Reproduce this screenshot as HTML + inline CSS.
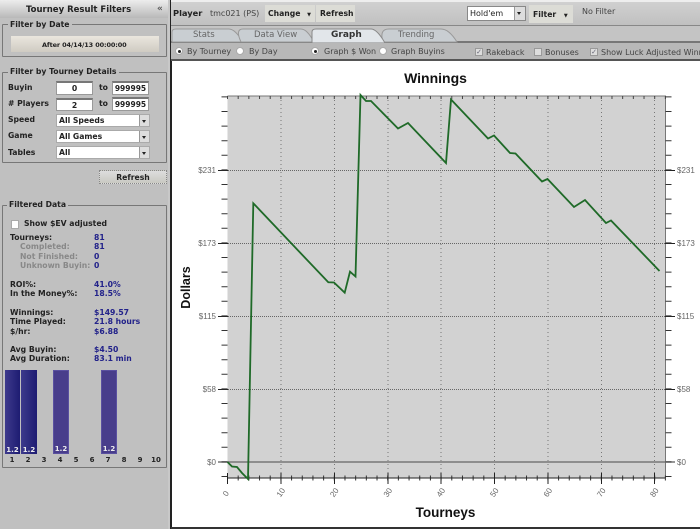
<!DOCTYPE html>
<html><head><meta charset="utf-8"><style>
html,body{margin:0;padding:0}
body{width:700px;height:529px;overflow:hidden;position:relative;background:#c0c0c0;font-family:"DejaVu Sans","Liberation Sans",sans-serif;color:#111;filter:blur(.3px)}
div,span.a{position:absolute;box-sizing:border-box}
.t{position:absolute;white-space:nowrap;font-size:7.7px;line-height:10px;font-weight:bold;color:#222}
.g{color:#888}.b{color:#22228a}
.box{border:1px solid #777;border-radius:1px}
.lg{position:absolute;background:#c0c0c0;white-space:nowrap;font-size:7.7px;line-height:10px;font-weight:bold;color:#222;padding:0 2px}
.in{background:#fff;border:1px solid #999;border-top:2px solid #777;text-align:center;font-size:7.7px;line-height:11px;font-weight:bold;color:#222}
.sel{background:#fff;border:1px solid #aaa;font-size:7.7px;line-height:12px;font-weight:bold;color:#222;padding-left:2px}
.sel i{position:absolute;right:0;top:0;width:9px;height:100%;background:#ddd;border-left:1px solid #999}
.sel i:after{content:"";position:absolute;left:2px;top:5px;border:2px solid transparent;border-top:3px solid #222}
.bar{background:linear-gradient(90deg,#3d3a8c,#1e1c72);height:84px;top:370px;width:16px}
.bar2{background:#483d8b;border:1px solid #5a50a0}
.bar span{position:absolute;bottom:-1px;left:0;right:0;text-align:center;font-size:7px;line-height:9px;color:#eee;font-weight:bold}
.n{position:absolute;top:456px;width:16px;text-align:center;font-size:7px;line-height:9px;font-weight:bold;color:#222;white-space:nowrap}
.tb{font-family:"DejaVu Sans",sans-serif;font-size:8px;line-height:10px;color:#444;position:absolute;white-space:nowrap}
.rad{position:absolute;width:8px;height:8px;border-radius:50%;background:#fff;border:1px solid #aaa}
.rad.on:after{content:"";position:absolute;left:1.500px;top:1.500px;width:3px;height:3px;border-radius:50%;background:#222}
.chk{position:absolute;width:8px;height:8px;background:#ddd;border:1px solid #999;font-size:7px;line-height:7px;color:#667;text-align:center}
.btn{background:linear-gradient(#ddd,#c9c9c2);font-weight:bold;font-size:7.7px;line-height:10px;color:#222;white-space:nowrap}
</style></head><body>
<!-- sidebar -->
<div style="left:0;top:0;width:169px;height:18px;background:linear-gradient(#ededed,#b9b9b9)"></div>
<div class="t" style="left:26px;top:5px;font-size:8.500px;color:#222">Tourney Result Filters</div>
<div class="t" style="left:157px;top:4px;font-size:9px;color:#555">«</div>

<div class="box" style="left:2px;top:24px;width:165px;height:33px"></div>
<div class="lg" style="left:8px;top:20px">Filter by Date</div>
<div style="left:11px;top:36px;width:148px;height:16px;background:linear-gradient(#eae6de,#cfcbc2)"></div>
<div class="t" style="left:42px;top:40px;font-size:6.500px;letter-spacing:-.12px">After 04/14/13 00:00:00</div>

<div class="box" style="left:2px;top:72px;width:165px;height:91px"></div>
<div class="lg" style="left:8px;top:67px">Filter by Tourney Details</div>
<div class="t" style="left:8px;top:83px">Buyin</div>
<div class="in" style="left:56px;top:81px;width:37px;height:14px">0</div>
<div class="t" style="left:99px;top:83px">to</div>
<div class="in" style="left:112px;top:81px;width:37px;height:14px;font-size:7.500px">999995</div>
<div class="t" style="left:8px;top:99px"># Players</div>
<div class="in" style="left:56px;top:98px;width:37px;height:13px">2</div>
<div class="t" style="left:99px;top:99px">to</div>
<div class="in" style="left:112px;top:97px;width:37px;height:14px;font-size:7.500px">999995</div>
<div class="t" style="left:8px;top:115px">Speed</div>
<div class="sel" style="left:56px;top:114px;width:94px;height:13px">All Speeds<i></i></div>
<div class="t" style="left:8px;top:131px">Game</div>
<div class="sel" style="left:56px;top:130px;width:94px;height:13px">All Games<i></i></div>
<div class="t" style="left:8px;top:148px">Tables</div>
<div class="sel" style="left:56px;top:146px;width:94px;height:13px">All<i></i></div>
<div class="btn" style="left:99px;top:170px;width:68px;height:14px;border:1px dotted #888;text-align:center;padding-top:2px">Refresh</div>

<div class="box" style="left:2px;top:205px;width:165px;height:263px"></div>
<div class="lg" style="left:7px;top:200px">Filtered Data</div>
<div style="left:11px;top:220px;width:8px;height:9px;background:#fff;border:1px solid #aaa"></div>
<div class="t" style="left:24px;top:219px">Show $EV adjusted</div>
<div class="t" style="left:10px;top:233px">Tourneys:</div><div class="t b" style="left:94px;top:233px">81</div>
<div class="t g" style="left:20px;top:242px">Completed:</div><div class="t b" style="left:94px;top:242px">81</div>
<div class="t g" style="left:20px;top:252px">Not Finished:</div><div class="t b" style="left:94px;top:252px">0</div>
<div class="t g" style="left:20px;top:261px">Unknown Buyin:</div><div class="t b" style="left:94px;top:261px">0</div>
<div class="t" style="left:10px;top:280px">ROI%:</div><div class="t b" style="left:94px;top:280px">41.0%</div>
<div class="t" style="left:10px;top:289px">In the Money%:</div><div class="t b" style="left:94px;top:289px">18.5%</div>
<div class="t" style="left:10px;top:308px">Winnings:</div><div class="t b" style="left:94px;top:308px">$149.57</div>
<div class="t" style="left:10px;top:317px">Time Played:</div><div class="t b" style="left:94px;top:317px">21.8 hours</div>
<div class="t" style="left:10px;top:327px">$/hr:</div><div class="t b" style="left:94px;top:327px">$6.88</div>
<div class="t" style="left:10px;top:345px">Avg Buyin:</div><div class="t b" style="left:94px;top:345px">$4.50</div>
<div class="t" style="left:10px;top:354px">Avg Duration:</div><div class="t b" style="left:94px;top:354px">83.1 min</div>

<div class="bar" style="left:5px;width:15px"><span>1.2</span></div>
<div class="bar" style="left:21px"><span>1.2</span></div>
<div class="bar bar2" style="left:53px"><span>1.2</span></div>
<div class="bar bar2" style="left:101px"><span>1.2</span></div>
<div class="n" style="left:4px">1</div><div class="n" style="left:20px">2</div><div class="n" style="left:36px">3</div><div class="n" style="left:52px">4</div><div class="n" style="left:68px">5</div><div class="n" style="left:84px">6</div><div class="n" style="left:100px">7</div><div class="n" style="left:116px">8</div><div class="n" style="left:132px">9</div><div class="n" style="left:148px">10</div>

<!-- right panel -->
<div style="left:168px;top:0;width:532px;height:529px;background:#fff"></div>
<div style="left:168px;top:0;width:2px;height:529px;background:#c8c8c8"></div>
<div style="left:170px;top:0;width:1.500px;height:529px;background:#222"></div>
<div style="left:171px;top:527px;width:529px;height:2px;background:#333"></div>
<div style="left:171px;top:0;width:529px;height:26px;background:linear-gradient(#d0d0d0,#c0c0c0);border-top:2px solid #eee;border-bottom:1px solid #888"></div>
<div class="t" style="left:173px;top:8px;font-size:8.300px">Player</div>
<div class="tb" style="left:210px;top:9px">tmc021 (PS)</div>
<div class="btn" style="left:265px;top:5px;width:50px;height:17px;padding:4px 0 0 3px;background:#dcdcd6">Change <span style="font-size:5px;margin-left:4px">▼</span></div>
<div class="btn" style="left:316px;top:5px;width:39px;height:17px;padding:4px 0 0 4px;background:#dcdcd6">Refresh</div>
<div class="sel" style="left:467px;top:6px;width:59px;height:15px;font-weight:normal;line-height:13px;font-size:8px;border-color:#888">Hold'em<i style="width:10px"></i></div>
<div class="btn" style="left:529px;top:5px;width:44px;height:18px;padding:5px 0 0 4px;background:#dcdcd6">Filter <span style="font-size:5px;margin-left:5px">▼</span></div>
<div class="tb" style="left:582px;top:7px">No Filter</div>

<!-- tabs -->
<div style="left:171px;top:26px;width:529px;height:17px;background:#c4c4c4;border-bottom:2px solid #777"></div>
<svg style="position:absolute;left:171px;top:26px" width="300" height="18">
<path d="M1 16V6Q1 3 5 3H58Q64 3 72 16Z" fill="#c9ced2" stroke="#999"/>
<path d="M70 16Q64 3 72 3H130Q136 3 143 16Z" fill="#c9ced2" stroke="#999"/>
<path d="M212 16Q208 3 218 3H270Q278 3 286 16Z" fill="#c9ced2" stroke="#999"/>
<path d="M141 17V6Q141 3 145 3H200Q206 3 214 17Z" fill="#e2e6ea" stroke="#888"/>
</svg>
<div class="tb" style="left:193px;top:30px;font-size:8.500px;color:#666">Stats</div>
<div class="tb" style="left:254px;top:30px;font-size:8.500px;color:#666">Data View</div>
<div class="tb" style="left:331px;top:30px;font-size:9px;font-weight:bold;color:#333">Graph</div>
<div class="tb" style="left:398px;top:30px;font-size:8.500px;color:#666">Trending</div>

<!-- options -->
<div style="left:171px;top:43px;width:529px;height:18px;background:#b8b8b8;border-bottom:2px solid #555"></div>
<span class="rad on a" style="left:175px;top:47px"></span><div class="tb" style="left:187px;top:47px">By Tourney</div>
<span class="rad a" style="left:236px;top:47px"></span><div class="tb" style="left:249px;top:47px">By Day</div>
<span class="rad on a" style="left:311px;top:47px"></span><div class="tb" style="left:324px;top:47px">Graph $ Won</div>
<span class="rad a" style="left:379px;top:47px"></span><div class="tb" style="left:391px;top:47px">Graph Buyins</div>
<span class="chk a" style="left:475px;top:48px">✓</span><div class="tb" style="left:486px;top:48px">Rakeback</div>
<span class="chk a" style="left:534px;top:48px"></span><div class="tb" style="left:545px;top:48px">Bonuses</div>
<span class="chk a" style="left:590px;top:48px">✓</span><div class="tb" style="left:601px;top:48px">Show Luck Adjusted Winnings</div>

<!-- chart -->
<svg style="position:absolute;left:0;top:0" width="700" height="529">
<rect x="227.500" y="96" width="438" height="382" fill="#d2d2d2"/>
<path d="M227.500 96H665.500V478" fill="none" stroke="#777"/>
<g fill="none" stroke="#777" stroke-dasharray="1 3">
<path d="M281 96V478M334.500 96V478M388 96V478M441 96V478M494.500 96V478M548 96V478M601.500 96V478M654.500 96V478"/>
</g>
<g fill="none" stroke="#666" stroke-dasharray="1 1">
<path d="M218 170.500H665M218 243.500H665M218 316.500H665M218 389.500H665"/>
</g>
<path d="M218 462H675" stroke="#777" stroke-width="1.500" fill="none"/>
<path d="M665 170.500H675M665 243.500H675M665 316.500H675M665 389.500H675M218 170.500H228M218 243.500H228M218 316.500H228M218 389.500H228" stroke="#222" fill="none"/>
<!-- ticks -->
<line x1="224.500" y1="477" x2="224.500" y2="96" stroke="#333" stroke-width="6" stroke-dasharray="1 13.600"/>
<line x1="668.500" y1="477" x2="668.500" y2="96" stroke="#333" stroke-width="6" stroke-dasharray="1 13.600"/>
<line x1="227" y1="478" x2="666" y2="478" stroke="#333" stroke-width="5" stroke-dasharray="1 9.680"/>
<line x1="227" y1="97.500" x2="666" y2="97.500" stroke="#444" stroke-width="3" stroke-dasharray="1 9.680"/>
<path d="M227.500 473V484M281 473V484M334.500 473V484M388 473V484M441 473V484M494.500 473V484M548 473V484M601.500 473V484M654.500 473V484M227 478H665" stroke="#222" fill="none"/>
<path d="M227.500 462L232 466.500L237 467L242 473L248 479L253.300 203.300L328.300 282.300L334 282.500L344.700 292.700L350 271.700L355.500 276.500L360.500 95L366 101L371 101L398 128.500L408 123L446 163L451 99.500L488 138.500L494 135.500L510 153L515.500 153.500L542 181.500L547.500 179L574 207L585 200L606 223L611 220.500L659.500 271" fill="none" stroke="#1f6a28" stroke-width="1.800" stroke-linejoin="miter"/>
<g font-family="Liberation Sans, sans-serif" font-size="8" fill="#666">
<text x="216" y="173" text-anchor="end">$231</text><text x="216" y="246" text-anchor="end">$173</text><text x="216" y="319" text-anchor="end">$115</text><text x="216" y="392" text-anchor="end">$58</text><text x="216" y="465" text-anchor="end">$0</text>
<text x="677" y="173">$231</text><text x="677" y="246">$173</text><text x="677" y="319">$115</text><text x="677" y="392">$58</text><text x="677" y="465">$0</text>
<text transform="translate(228 495) rotate(-55)" text-anchor="middle">0</text>
<text transform="translate(283 494) rotate(-55)" text-anchor="middle">10</text>
<text transform="translate(336.500 494) rotate(-55)" text-anchor="middle">20</text>
<text transform="translate(390 494) rotate(-55)" text-anchor="middle">30</text>
<text transform="translate(443 494) rotate(-55)" text-anchor="middle">40</text>
<text transform="translate(496.500 494) rotate(-55)" text-anchor="middle">50</text>
<text transform="translate(550 494) rotate(-55)" text-anchor="middle">60</text>
<text transform="translate(603.500 494) rotate(-55)" text-anchor="middle">70</text>
<text transform="translate(656.500 494) rotate(-55)" text-anchor="middle">80</text>
</g>
<g font-family="Liberation Sans, sans-serif" font-weight="bold" fill="#111" text-anchor="middle">
<text x="435.500" y="83" font-size="14">Winnings</text>
<text x="445.500" y="517" font-size="13.500">Tourneys</text>
<text transform="translate(190 287.500) rotate(-90)" font-size="12.500">Dollars</text>
</g>
</svg>
</body></html>
